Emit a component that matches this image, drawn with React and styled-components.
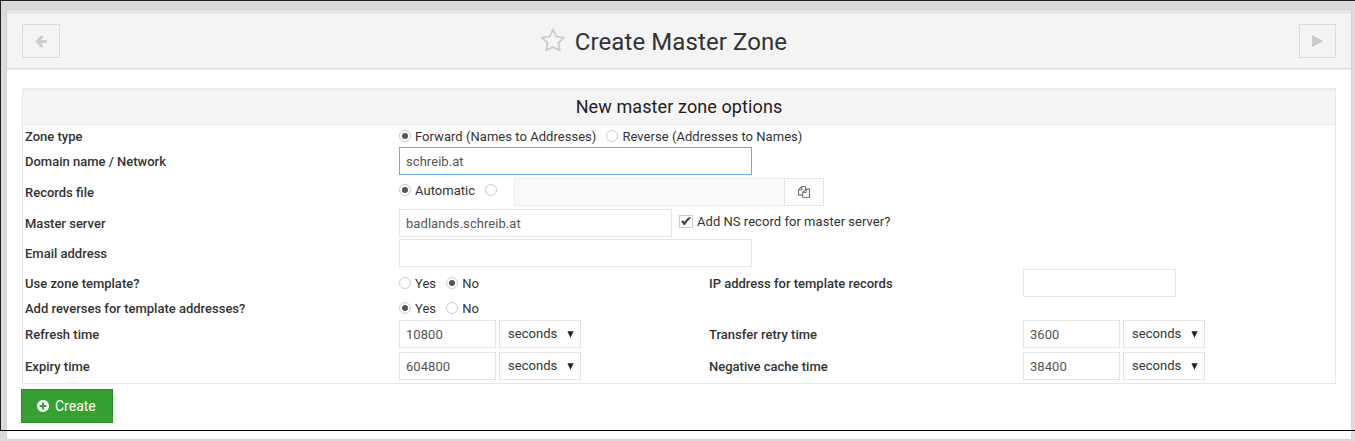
import React from "react";
import styled, { createGlobalStyle, css } from "styled-components";

const GlobalStyle = createGlobalStyle`
  * { box-sizing: border-box; }
  html, body { margin: 0; height: 100%; }
  body {
    background: #dbdbdb;
    color: #333;
    font: 13px/20px Roboto, "Liberation Sans", sans-serif;
    overflow: hidden;
  }
`;

const Page = styled.div`
  position: relative;
  height: 441px;
  padding: 10px 4px 2px 7px;
`;

const Frame = styled.div`
  position: absolute;
  top: 0;
  left: 0;
  right: 0;
  height: 431px;
  border: solid #000;
  border-width: 1px 0 1px 1px;
  border-top-color: #231f20;
  border-left-color: #231f20;
  pointer-events: none;
`;

const Panel = styled.main`
  height: 429px;
  background: #fff;
  box-shadow: 0 0 2px rgba(0, 0, 0, 0.08);
`;

const PanelHeader = styled.header`
  display: grid;
  grid-template-columns: 38px 1fr 37px;
  align-items: center;
  height: 59px;
  padding: 0 15px;
  background: #f4f4f4;
  border-top: 4px solid #e8e8e8;
  border-bottom: 1px solid #dcdcdc;
  box-shadow: 0 1px 2px rgba(0, 0, 0, 0.08);
`;

const NavButton = styled.button`
  display: flex;
  align-items: center;
  justify-content: center;
  height: 34px;
  padding: 0;
  color: #ccc;
  background: transparent;
  border: 1px solid #dcdcdc;
`;

const Title = styled.h1`
  display: flex;
  align-items: center;
  justify-content: center;
  gap: 8px;
  margin: 0;
  padding: 2px 31px 0 0;
  font-size: 24px;
  font-weight: 400;
  line-height: 30px;
  letter-spacing: 0.09px;
`;

const Icon = styled.svg`
  display: block;
  flex: none;
  width: ${(p) => p.$size}px;
  height: ${(p) => p.$size}px;
  fill: currentColor;
`;

const StarIcon = styled(Icon)`
  color: #ccc;
  margin: -3px 1px 0 -1px;
`;

const Content = styled.div`
  padding: 19px 15px 0;
`;

const Options = styled.section`
  height: 296px;
  border: 1px solid #e8e8e8;
  border-top: 3px solid #ededed;
`;

const OptionsTitle = styled.h2`
  height: 34px;
  margin: 0;
  color: #222;
  background: #f5f5f5;
  border-bottom: 1px solid #e8e8e8;
  font-size: 18px;
  font-weight: 400;
  line-height: 31px;
  letter-spacing: 0.1px;
  text-align: center;
`;

const Row = styled.div`
  display: grid;
  grid-template-columns: 374px 310px 314px 1fr;
  align-items: center;
  height: ${(p) => p.$height || 28}px;
  margin-top: ${(p) => p.$gap || 0}px;
  padding-left: 2px;
`;

const Label = styled.span`
  padding-top: 1px;
  font-weight: 500;
  white-space: nowrap;
`;

const Field = styled.div`
  display: flex;
  align-items: center;
  letter-spacing: 0.04px;
  white-space: nowrap;
`;

const Input = styled.input`
  flex: none;
  width: ${(p) => p.$width}px;
  height: 28px;
  padding: 1px 6px 0;
  color: #555;
  background: #fff;
  border: 1px solid ${(p) => (p.$active ? "#66afe9" : "#e5e5e5")};
  border-radius: 0;
  outline: 0;
  font: inherit;
  letter-spacing: 0.06px;
  &:disabled { background: #fafafa; border-color: #ededed; }
`;

const Choice = styled.label`
  display: flex;
  align-items: center;
  gap: 4px;
  margin-right: 10px;
  ${(p) => p.$raised && css`padding-bottom: 4px;`}
`;

const ChoiceText = styled.span`
  padding-top: 1px;
  line-height: 19px;
`;

const Dot = styled.span`
  display: flex;
  align-items: center;
  justify-content: center;
  flex: none;
  width: 12px;
  height: 12px;
  border: 1px solid #ccc;
  border-radius: 50%;
  &::after {
    content: "";
    width: 6px;
    height: 6px;
    border-radius: 50%;
    background: ${(p) => (p.$checked ? "#555" : "transparent")};
  }
`;

const CheckBox = styled.span`
  display: flex;
  align-items: center;
  justify-content: center;
  flex: none;
  width: 14px;
  height: 13px;
  color: #444;
  border: 1px solid #ccc;
`;

const FileInput = styled(Input)`
  margin-left: 3px;
`;

const FileButton = styled.button`
  display: flex;
  align-items: center;
  justify-content: center;
  flex: none;
  width: 40px;
  height: 28px;
  margin-left: -1px;
  padding: 0;
  color: #555;
  background: #fff;
  border: 1px solid #e5e5e5;
`;

const CheckLabel = styled(Choice)`
  margin-left: 7px;
`;

const UnitSelect = styled.div`
  display: flex;
  align-items: center;
  justify-content: space-between;
  width: 82px;
  height: 28px;
  margin-left: 3px;
  padding: 0 6px 0 8px;
  border: 1px solid #e5e5e5;
`;

const CreateButton = styled.button`
  display: flex;
  align-items: center;
  gap: 5px;
  width: 92px;
  height: 34px;
  margin: 5px 0 0 -1px;
  padding: 0 14px;
  color: #fff;
  background: #36a033;
  border: 1px solid #2f8c2d;
  font: 14px/20px Roboto, "Liberation Sans", sans-serif;
`;

const paths = {
  back: "M1664 896v128q0 53-32.5 90.5t-84.5 37.5h-704l293 294q38 36 38 90t-38 90l-75 76q-37 37-90 37-52 0-91-37l-651-652q-37-37-37-90 0-52 37-91l651-650q38-38 91-38 52 0 90 38l75 74q38 38 38 91t-38 91l-293 293h704q52 0 84.5 37.5t32.5 90.5z",
  star: "M1201 1004l306-297-422-62-189-382-189 382-422 62 306 297-73 421 378-199 377 199zm527-357q0 22-26 48l-363 354 86 500q1 7 1 20 0 50-41 50-19 0-40-12l-449-236-449 236q-22 12-40 12-21 0-31.5-14.5t-10.5-35.5q0-6 2-20l86-500-364-354q-25-27-25-48 0-37 56-46l502-73 225-455q19-41 49-41t49 41l225 455 502 73q56 9 56 46z",
  plus: "M1344 960v-128q0-26-19-45t-45-19h-256v-256q0-26-19-45t-45-19h-128q-26 0-45 19t-19 45v256h-256q-26 0-45 19t-19 45v128q0 26 19 45t45 19h256v256q0 26 19 45t45 19h128q26 0 45-19t19-45v-256h256q26 0 45-19t19-45zm320-64q0 209-103 385.5t-279.5 279.5-385.5 103-385.5-103-279.5-279.5-103-385.5 103-385.5 279.5-279.5 385.5-103 385.5 103 279.5 279.5 103 385.5z",
  files: "M1696 384q40 0 68 28t28 68v1216q0 40-28 68t-68 28h-960q-40 0-68-28t-28-68v-288h-544q-40 0-68-28t-28-68v-672q0-40 20-88t48-76l408-408q28-28 76-48t88-20h416q40 0 68 28t28 68v328q68-40 128-40h416zm-544 213l-299 299h299v-299zm-640-384l-299 299h299v-299zm196 647l316-316v-416h-384v416q0 40-28 68t-68 28h-416v640h512v-256q0-40 20-88t48-76zm956 804v-1152h-384v416q0 40-28 68t-68 28h-416v640h896z",
};

const Radio = ({ checked, raised, children }) => (
  <Choice $raised={raised}>
    <Dot $checked={checked} />
    <ChoiceText>{children}</ChoiceText>
  </Choice>
);

const Duration = ({ value }) => (
  <Field>
    <Input $width={97} defaultValue={value} />
    <UnitSelect>
      seconds
      <svg width="7" height="7" viewBox="0 0 7 7"><path d="M.4 .3h6.2L3.5 6.8z" fill="#222" /></svg>
    </UnitSelect>
  </Field>
);

export default function App() {
  return (
    <Page>
      <GlobalStyle />
      <Panel>
        <PanelHeader>
          <NavButton aria-label="Back">
            <Icon $size={14} viewBox="0 0 1792 1792"><path d={paths.back} /></Icon>
          </NavButton>
          <Title>
            <StarIcon $size={26} viewBox="0 0 1792 1792"><path d={paths.star} /></StarIcon>
            Create Master Zone
          </Title>
          <NavButton aria-label="Next">
            <Icon $size={12} viewBox="0 0 12 12"><path d="M0 0v12L11.2 6z" /></Icon>
          </NavButton>
        </PanelHeader>
        <Content>
          <Options>
            <OptionsTitle>New master zone options</OptionsTitle>
            <Row $height={22}>
              <Label>Zone type</Label>
              <Field>
                <Radio checked>Forward (Names to Addresses)</Radio>
                <Radio>Reverse (Addresses to Names)</Radio>
              </Field>
            </Row>
            <Row>
              <Label>Domain name / Network</Label>
              <Field><Input $width={353} $active defaultValue="schreib.at" /></Field>
            </Row>
            <Row $gap={3}>
              <Label>Records file</Label>
              <Field>
                <Radio checked raised>Automatic</Radio>
                <Radio raised />
                <FileInput $width={271} disabled />
                <FileButton aria-label="Choose file">
                  <Icon $size={12} viewBox="0 0 1792 1792"><path d={paths.files} /></Icon>
                </FileButton>
              </Field>
            </Row>
            <Row $gap={3}>
              <Label>Master server</Label>
              <Field>
                <Input $width={273} defaultValue="badlands.schreib.at" />
                <CheckLabel $raised>
                  <CheckBox>
                    <svg width="10" height="9" viewBox="0 0 10 9">
                      <path d="M0 4.6 1.7 3.3 3.5 4.8C5 2.6 6.8 .8 8.8 0L10 .8C7.8 2.8 5.8 5 4.3 7.8L2.8 8.2C2.1 6.8 1.2 5.8 0 4.6z" fill="currentColor" />
                    </svg>
                  </CheckBox>
                  <ChoiceText>Add NS record for master server?</ChoiceText>
                </CheckLabel>
              </Field>
            </Row>
            <Row $gap={2}>
              <Label>Email address</Label>
              <Field><Input $width={353} /></Field>
            </Row>
            <Row $gap={2}>
              <Label>Use zone template?</Label>
              <Field><Radio>Yes</Radio><Radio checked>No</Radio></Field>
              <Label>IP address for template records</Label>
              <Field><Input $width={153} /></Field>
            </Row>
            <Row $height={22}>
              <Label>Add reverses for template addresses?</Label>
              <Field><Radio checked>Yes</Radio><Radio>No</Radio></Field>
            </Row>
            <Row $gap={1}>
              <Label>Refresh time</Label>
              <Duration value="10800" />
              <Label>Transfer retry time</Label>
              <Duration value="3600" />
            </Row>
            <Row $gap={4}>
              <Label>Expiry time</Label>
              <Duration value="604800" />
              <Label>Negative cache time</Label>
              <Duration value="38400" />
            </Row>
          </Options>
          <CreateButton>
            <Icon $size={14} viewBox="0 0 1792 1792"><path d={paths.plus} /></Icon>
            Create
          </CreateButton>
        </Content>
      </Panel>
      <Frame />
    </Page>
  );
}
